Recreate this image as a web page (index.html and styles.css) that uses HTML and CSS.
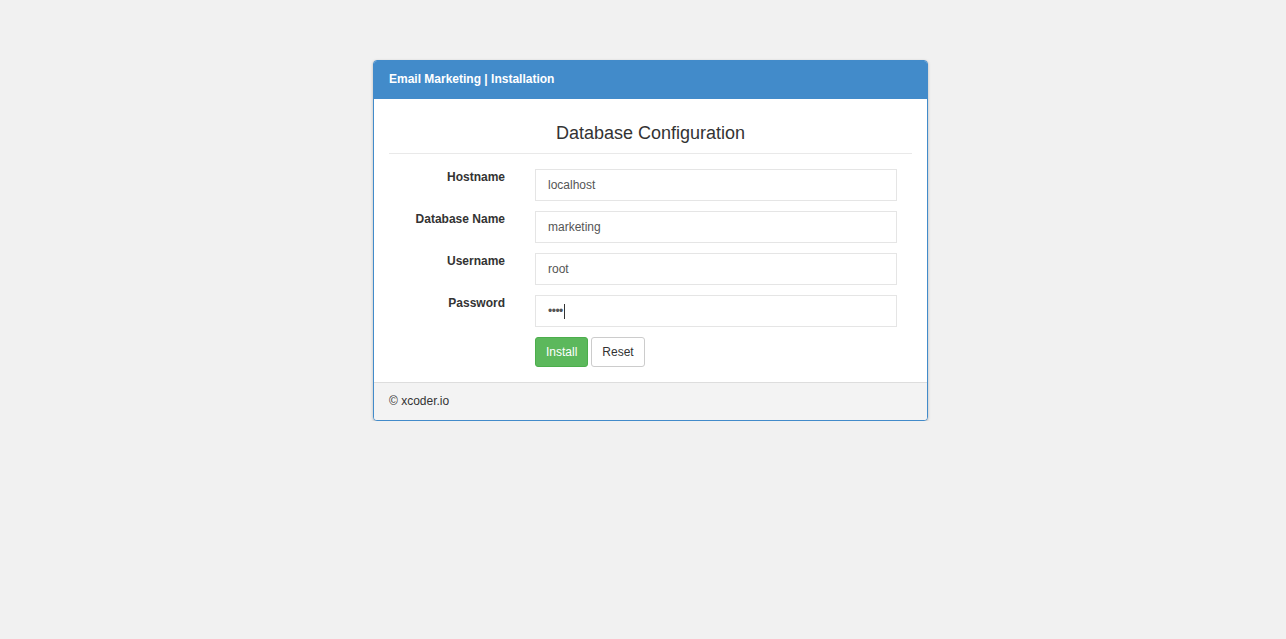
FILE: index.html
```html
<!DOCTYPE html>
<html>
<head>
<meta charset="utf-8">
<title>Email Marketing | Installation</title>
<link rel="stylesheet" href="styles.css">
</head>
<body>
<div class="page">
  <div class="panel">
    <div class="panel-heading">Email Marketing | Installation</div>
    <div class="panel-body">
      <h4 class="title">Database Configuration</h4>
      <form class="form">
        <div class="row">
          <label class="label">Hostname</label>
          <input class="input" type="text" value="localhost">
        </div>
        <div class="row">
          <label class="label">Database Name</label>
          <input class="input" type="text" value="marketing">
        </div>
        <div class="row">
          <label class="label">Username</label>
          <input class="input" type="text" value="root">
        </div>
        <div class="row">
          <label class="label">Password</label>
          <div class="input pw"><span class="dots">••••</span><span class="caret"></span></div>
        </div>
        <div class="row">
          <span class="label"></span>
          <div class="buttons">
            <button type="button" class="btn btn-success">Install</button>
            <button type="button" class="btn btn-default">Reset</button>
          </div>
        </div>
      </form>
    </div>
    <div class="panel-footer">© xcoder.io</div>
  </div>
</div>
</body>
</html>
```

FILE: styles.css
```css
* { box-sizing: border-box; }
html, body {
  margin: 0;
  padding: 0;
  background: #f1f1f1;
  font-family: "Liberation Sans", Arial, sans-serif;
  font-size: 12px;
  color: #333;
}
.page {
  display: flex;
  justify-content: center;
  padding-top: 60px;
}
.panel {
  width: 555px;
  margin-left: 15px;
  background: #fff;
  border: 1px solid #428bca;
  border-radius: 4px;
  box-shadow: 0 1px 3px rgba(0,0,0,0.25);
  overflow: hidden;
}
.panel-heading {
  background: #428bca;
  color: #fff;
  font-weight: bold;
  font-size: 12px;
  line-height: 18px;
  padding: 9px 15px 11px;
}
.panel-body {
  padding: 15px 15px 15px 15px;
}
.title {
  margin: 9px 0 0 0;
  font-weight: normal;
  font-size: 18px;
  line-height: 20px;
  text-align: center;
  color: #333;
  padding-bottom: 10px;
  border-bottom: 1px solid #e9e9e9;
}
.form {
  margin-top: 15px;
  display: flex;
  flex-direction: column;
  gap: 10px;
}
.row {
  display: flex;
  align-items: flex-start;
}
.label {
  width: 116px;
  flex: none;
  text-align: right;
  font-weight: bold;
  font-size: 12px;
  line-height: 17px;
  padding-top: 0;
  margin-right: 30px;
  color: #333;
}
.input {
  width: 362px;
  height: 32px;
  border: 1px solid #e5e5e5;
  border-radius: 0;
  padding: 0 12px;
  font-family: "Liberation Sans", Arial, sans-serif;
  font-size: 12px;
  color: #555;
  background: #fff;
  outline: none;
}
.pw {
  display: flex;
  align-items: center;
}
.dots {
  font-size: 12px;
  letter-spacing: -0.5px;
  color: #555;
}
.caret {
  display: inline-block;
  width: 1px;
  height: 15px;
  background: #333;
  margin-left: 1px;
}
.buttons {
  display: flex;
  gap: 3px;
}
.btn {
  height: 30px;
  padding: 0 10px;
  font-family: "Liberation Sans", Arial, sans-serif;
  font-size: 12px;
  border-radius: 3px;
  border: 1px solid;
  cursor: pointer;
}
.btn-success {
  background: #5cb85c;
  border-color: #4cae4c;
  color: #fff;
}
.btn-default {
  background: #fff;
  border-color: #ccc;
  color: #333;
}
.panel-footer {
  background: #f3f3f3;
  border-top: 1px solid #ddd;
  padding: 10px 15px;
  font-size: 12px;
  line-height: 17px;
  color: #333;
}
```
